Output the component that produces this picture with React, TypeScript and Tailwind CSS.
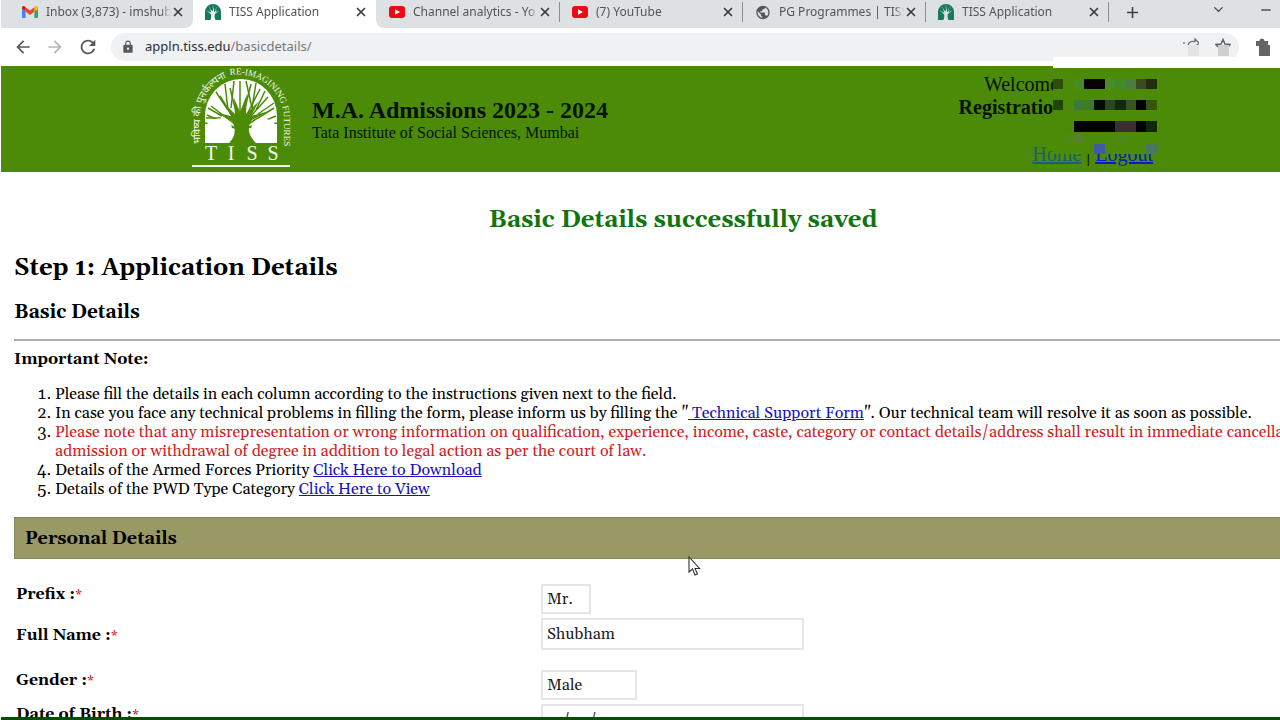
import type { ReactNode } from 'react'
import { ChevronDown, X } from 'lucide-react'
import { MdAdd, MdArrowBack, MdArrowForward, MdLock, MdPublic, MdRefresh, MdRemove } from 'react-icons/md'

const times = "font-['Liberation_Serif',serif]"
const georgia = "font-[Gelasio,Georgia,'Liberation_Serif',serif]"
const sans = "font-['Noto_Sans',sans-serif]"

function GmailIcon() {
  return (
    <svg viewBox="0 0 16 12" className="h-3 w-4">
      <path d="M1 12h2.600V5.600L0 3v8a1 1 0 0 0 1 1Z" fill="#4285f4" />
      <path d="M12.400 12H15a1 1 0 0 0 1-1V3l-3.600 2.600Z" fill="#34a853" />
      <path d="M12.400 1.200v4.400L16 3V1.600C16 .2 14.400-.5 13.300.4Z" fill="#fbbc04" />
      <path d="M3.600 5.600V1.200L8 4.500l4.400-3.300v4.400L8 8.900Z" fill="#ea4335" />
      <path d="M0 1.600V3l3.600 2.600V1.200L2.700.4C1.600-.5 0 .2 0 1.600Z" fill="#c5221f" />
    </svg>
  )
}

function YouTubeIcon() {
  return (
    <svg viewBox="0 0 16 12" className="h-3 w-4">
      <rect width="16" height="12" rx="3" fill="#ee0a14" />
      <path d="M6 3.200v5.600L11 6Z" fill="#fff" />
    </svg>
  )
}

function TissIcon() {
  return (
    <svg viewBox="0 0 16 16" className="h-4 w-4">
      <path d="M0 16V8a8 8 0 0 1 16 0v8h-5.500c-1-2-1.200-4-.6-6l3-2-2.600.5 1.500-3-2.600 2.500L8.500 3l-.8 4.500L5 5l1.400 3.500-3.200-.4 3 2.400c.3 2 0 4-1 5.500Z" fill="#15795a" />
      <path d="m2 7 3 1M4 3l2 3M8 1v3M12 3l-2 3M14 7l-3 1" stroke="#7fc0a5" strokeWidth=".6" />
    </svg>
  )
}

function Tab({ icon, title, divider }: { icon: ReactNode; title: string; divider?: boolean }) {
  return (
    <div className="relative flex h-7 w-[183px] shrink-0 items-center pb-1 pl-3 pr-2">
      <span className="flex w-4 shrink-0 justify-center">{icon}</span>
      <span className="ml-2 min-w-0 flex-1 overflow-hidden whitespace-nowrap text-xs text-[#50545a] [mask-image:linear-gradient(to_right,black_92%,transparent)]">
        {title}
      </span>
      <button aria-label="Close tab" className="text-[#3c4043]">
        <X size={14} strokeWidth={3} />
      </button>
      {divider && <span className="absolute right-0 top-[2px] h-5 w-px bg-[#8a8d91]" />}
    </div>
  )
}

function BrowserBar() {
  return (
    <div className={`${sans} bg-white`}>
      <div className="flex">
        <div className="flex shrink-0 rounded-br-lg bg-[#dee1e4] pl-[9px]">
          <Tab icon={<GmailIcon />} title="Inbox (3,873) - imshub" />
        </div>
        <Tab icon={<TissIcon />} title="TISS Application" />
        <div className="flex min-w-0 flex-1 rounded-bl-lg bg-[#dee1e4] pl-px">
          <Tab icon={<YouTubeIcon />} title="Channel analytics - Yo" divider />
          <Tab icon={<YouTubeIcon />} title="(7) YouTube" divider />
          <Tab icon={<MdPublic size={17} className="text-[#54585c]" />} title="PG Programmes | TISS" divider />
          <Tab icon={<TissIcon />} title="TISS Application" divider />
          <button aria-label="New tab" className="ml-[14px] pb-1 text-[#3c4043]">
            <MdAdd size={19} />
          </button>
          <div className="ml-auto flex items-start gap-8 pr-[6px] pt-[2px] text-[#3c4043]">
            <button aria-label="Search tabs">
              <ChevronDown size={15} strokeWidth={2} />
            </button>
            <button aria-label="Minimize">
              <MdRemove size={16} />
            </button>
          </div>
        </div>
      </div>
      <div className="flex h-[38px] items-center pl-3 text-[#55595d]">
        <button aria-label="Back">
          <MdArrowBack size={20} />
        </button>
        <button aria-label="Forward" className="ml-3 text-[#b4b7ba]">
          <MdArrowForward size={20} />
        </button>
        <button aria-label="Reload" className="ml-3">
          <MdRefresh size={22} />
        </button>
        <div className="ml-3 flex h-7 min-w-0 flex-1 items-center rounded-full bg-[#eff1f2] pl-[10px] pr-2">
          <MdLock size={14} className="shrink-0" />
          <div className="ml-[10px] flex-1 text-[13px] text-[#75797d]">
            <span className="text-[#2c2f33]">appln.tiss.edu</span>/basicdetails/
          </div>
          <button aria-label="Share">
            <svg viewBox="0 0 16 18" className="h-[18px] w-4" fill="none">
              <path d="M1 4v2M5 7c1-3 4-4 7-3.500V1l4 4-3 3" stroke="#6b6f73" strokeWidth="1.300" />
              <path d="M5 7h11v11H5Z" fill="#e2e3e4" />
            </svg>
          </button>
          <button aria-label="Bookmark this page" className="ml-4">
            <svg viewBox="0 0 16 18" className="h-[18px] w-4" fill="none">
              <path d="m3 9-2-2.500 5-.5 2-4.500 2 4.500 5 .5L13 9" stroke="#5f6368" strokeWidth="1.500" />
              <path d="M3 7h11v11H3Z" fill="#cdcfd1" />
            </svg>
          </button>
        </div>
        <button aria-label="Extensions" className="ml-4 mr-[9px]">
          <svg viewBox="0 0 16 18" className="h-[18px] w-4" fill="#626467">
            <path d="M1 3h3.500a2.500 2.500 0 0 1 5 0H13v4h2v11H4V8H1Z" />
          </svg>
        </button>
      </div>
    </div>
  )
}

const branches = [
  'M50 62 30 30', 'M50 62 21 40', 'M50 62 40 22', 'M50 62 50 15', 'M50 62 61 18', 'M50 62 70 23', 'M52 60 78 31',
  'M52 62 84 42', 'M52 64 86 50', 'M50 64 17 49', 'M46 62 15 57', 'M56 62 87 57', 'M38 44 26 26', 'M38 44 35 18',
  'M41 42 44 15', 'M62 42 56 15', 'M62 42 66 17', 'M66 44 75 25', 'M68 48 84 37', 'M32 50 18 42', 'M31 52 16 52',
]

function TissLogo() {
  return (
    <svg viewBox="0 0 102 106" className="h-[106px] w-[102px] shrink-0" role="img" aria-label="TISS">
      <defs>
        <path id="arcLeft" d="M10 78V52C10 34 20 19 38 11" />
        <path id="arcRight" d="M40 9C64 5 94 21 94 53V82" />
      </defs>
      <path d="M15 77V50a36 37 0 0 1 72 0v27Z" fill="#fff" />
      <g stroke="#4b8b08" fill="none" strokeWidth="1.500">
        {branches.map((d) => (
          <path key={d} d={d} />
        ))}
      </g>
      <path d="M39 77c7-7 7-15 3-22L27 47l14 3-9-15 13 13-1-16 6 14 7-18-1 20 13-13-8 15 18-5-17 9c-6 8-3 17 5 23Z" fill="#4b8b08" />
      <path d="M15 77V62c2-9 17-12 23-7 6 5 6 17 1 22ZM87 77V62c-2-9-17-12-22-7-6 5-5 17 1 22Z" fill="#fff" />
      <g fill="#f3f8ec">
        <text fontSize="10" fontFamily="Noto Sans Devanagari, Noto Sans, sans-serif">
          <textPath href="#arcLeft">भविष्य की पुनर्कल्पना</textPath>
        </text>
        <text fontSize="9" fontFamily="Liberation Serif, serif">
          <textPath href="#arcRight">RE-IMAGINING FUTURES</textPath>
        </text>
        <g fontSize="20" fontFamily="Liberation Serif, serif" textAnchor="middle">
          <text x="21" y="94">T</text>
          <text x="41" y="94">I</text>
          <text x="62" y="94">S</text>
          <text x="83" y="94">S</text>
        </g>
        <path d="M2 99h98v2H2Z" />
      </g>
    </svg>
  )
}

// x, y, width, height, colour
const mosaic: [number, number, number, number, string][] = [
  [0, 11, 10, 10, '#2f4c10'],
  [21, 11, 10, 10, '#4a8c24'],
  [31, 11, 21, 10, '#080303'],
  [52, 11, 10, 10, '#4b8a26'],
  [62, 11, 11, 10, '#3f8d20'],
  [73, 11, 10, 10, '#4b7d42'],
  [83, 11, 10, 10, '#3c4a22'],
  [93, 11, 11, 10, '#242c0e'],
  [0, 32, 10, 10, '#204606'],
  [21, 32, 10, 10, '#3f7838'],
  [31, 32, 10, 10, '#3f7a25'],
  [41, 32, 11, 10, '#030a02'],
  [52, 32, 10, 10, '#28481a'],
  [62, 32, 11, 10, '#102a05'],
  [73, 32, 10, 10, '#36551c'],
  [83, 32, 10, 10, '#020402'],
  [93, 32, 11, 10, '#34560f'],
  [21, 53, 41, 11, '#030402'],
  [62, 53, 21, 11, '#3a3030'],
  [83, 53, 10, 11, '#020302'],
  [93, 53, 11, 11, '#12260a'],
  [10, 65, 11, 10, '#4d8a14'],
  [21, 65, 10, 10, '#55832a'],
  [62, 65, 11, 10, '#4f8718'],
  [41, 76, 11, 10, '#3f5ba6'],
  [93, 76, 11, 10, '#46795e'],
]

function SiteHeader() {
  return (
    <header className={`${times} relative flex h-[106px] justify-between bg-[#4b8b08] pl-[189px] pr-[127px] text-[#051202]`}>
      <div className="flex">
        <TissLogo />
        <div className="ml-5 pt-[31px]">
          <div className="text-2xl/[26px] font-bold">M.A. Admissions 2023 - 2024</div>
          <div className="text-base/5">Tata Institute of Social Sciences, Mumbai</div>
        </div>
      </div>
      <div className="relative pt-[7px] text-right text-xl/[23px]">
        <div className="pr-[94px]">Welcome</div>
        <div className="pr-[100px] font-bold">Registratio</div>
        <div className="pt-6">
          <a href="#home" className="text-[#1b5f72] underline">Home</a> |{' '}
          <a href="#logout" className="text-[#0a1cc4] underline">Logout</a>
        </div>
        <svg viewBox="0 0 106 86" className="absolute right-[-6px] top-[2px] h-[86px] w-[106px]">
          <path d="M0 0h106v86H0Z" fill="#4b8b08" />
          {mosaic.map(([x, y, w, h, fill]) => (
            <rect key={`${x}-${y}`} x={x} y={y} width={w} height={h} fill={fill} />
          ))}
        </svg>
      </div>
      <div className="absolute -top-[9px] right-0 h-[11px] w-[227px] bg-white" />
    </header>
  )
}

const fields = [
  { id: 'prefix', label: 'Prefix', value: 'Mr.', row: 'items-start', box: 'h-[30px] w-[50px]' },
  { id: 'name', label: 'Full Name', value: 'Shubham', row: 'items-end mt-1', box: 'h-8 w-[263px]' },
  { id: 'gender', label: 'Gender', value: 'Male', row: 'items-start mt-5', box: 'h-[30px] w-24' },
  { id: 'dob', label: 'Date of Birth', value: '\u00a0\u00a0\u00a0\u00a0/\u00a0\u00a0\u00a0\u00a0\u00a0/', row: 'items-start mt-1', box: 'h-8 w-[263px]' },
]

export default function App() {
  return (
    <div className="flex h-screen flex-col overflow-hidden bg-white">
      <div className="min-h-0 flex-1 overflow-hidden">
        <div className="pl-px">
          <BrowserBar />
          <SiteHeader />
        </div>
        <main className={`${georgia} pl-[14px] text-base/[19px] text-black`}>
          <h2 className="pl-[72px] pt-[33px] text-center text-2xl/[30px] font-bold text-[#107410]">
            Basic Details successfully saved
          </h2>
          <h1 className="mt-[18px] text-2xl/[30px] font-bold">Step 1: Application Details</h1>
          <h3 className="mt-[18px] text-[19px]/[22px] font-bold">Basic Details</h3>
          <hr className="mt-4 border-t-2 border-[#adadad]" />
          <h4 className="mt-[9px] font-bold">Important Note:</h4>
          <ol className="mt-4 list-decimal whitespace-nowrap pl-[41px]">
            <li>Please fill the details in each column according to the instructions given next to the field.</li>
            <li>
              In case you face any technical problems in filling the form, please inform us by filling the "
              <a href="#support" className="text-[#1a12b8] underline">&nbsp;Technical Support Form</a>". Our technical team
              will resolve it as soon as possible.
            </li>
            <li>
              <span className="text-[#cf1c22]">
                Please note that any misrepresentation or wrong information on qualification, experience, income, caste,
                category or contact details/address shall result in immediate cancellation of
                <br />
                admission or withdrawal of degree in addition to legal action as per the court of law.
              </span>
            </li>
            <li>
              Details of the Armed Forces Priority{' '}
              <a href="#armed-forces" className="text-[#1a12b8] underline">Click Here to Download</a>
            </li>
            <li>
              Details of the PWD Type Category{' '}
              <a href="#pwd" className="text-[#1a12b8] underline">Click Here to View</a>
            </li>
          </ol>
          <section className="relative mt-[18px]">
            <h3 className="border border-r-0 border-[#85855a] bg-[#999966] pb-2 pl-[10px] pt-[10px] text-lg/[22px] font-bold">
              Personal Details
            </h3>
            <svg viewBox="0 0 13 20" className="absolute left-[674px] top-[39px] h-5 w-[13px]">
              <path d="M1 1v15l3.500-3 2.500 6 2.500-1-2.500-5.500h4.500Z" fill="#fff" stroke="#333" strokeWidth="1.100" />
            </svg>
            <form className="pt-[25px]">
              {fields.map((field) => (
                <div key={field.id} className={`flex ${field.row}`}>
                  <label htmlFor={field.id} className="w-[527px] pb-1 pl-[2px] pt-px font-bold">
                    {field.label} :<span className="text-sm/[19px] font-normal text-[#d4151d]">*</span>
                  </label>
                  <input
                    id={field.id}
                    defaultValue={field.value}
                    className={`${field.box} border-2 border-[#e6e6e6] bg-white px-1 text-[#1c1c1c] outline-none`}
                  />
                </div>
              ))}
            </form>
          </section>
        </main>
      </div>
      <div className="ml-px h-[3px] shrink-0 bg-[#064d06]" />
    </div>
  )
}
